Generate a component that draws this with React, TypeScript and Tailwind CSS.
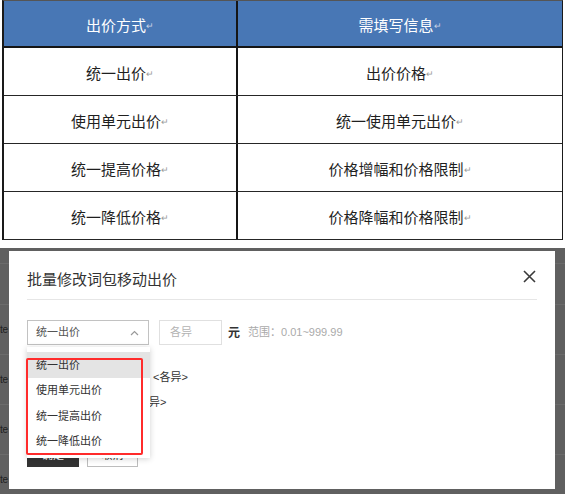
import React from "react"

const rows: [string, string][] = [
  ["统一出价", "出价价格"],
  ["使用单元出价", "统一使用单元出价"],
  ["统一提高价格", "价格增幅和价格限制"],
  ["统一降低价格", "价格降幅和价格限制"],
]

const options = ["统一出价", "使用单元出价", "统一提高出价", "统一降低出价"]

// Word 里的段落标记
function Mark({ light }: { light?: boolean }) {
  return <span className={`text-[9px] leading-none ${light ? "text-[#c9d3e6]" : "text-[#9a9a9a]"}`}>↵</span>
}

function Cell({ text, light, divider }: { text: string; light?: boolean; divider?: boolean }) {
  return (
    <div
      className={`flex items-center justify-center pt-[5px] ${divider ? "border-r-2 border-[#151515]" : ""}`}
    >
      <span>{text}</span>
      <Mark light={light} />
    </div>
  )
}

// 背景页面露出的灰色边条
function Strip({ withText, width }: { withText?: boolean; width: string }) {
  const heights = ["h-[16px]", "h-[41px]", "h-[50px]", "h-[50px]", "h-[50px]", "h-[50px]"]
  return (
    <div className={`${width} flex flex-col overflow-hidden`}>
      {heights.map((h, i) => (
        <div key={i} className={`${h} shrink-0 border-b border-[#6b6b6b] flex items-center`}>
          {withText && i >= 2 && <span className="text-[10px] leading-none text-[#1e1e1e] tracking-tight">te</span>}
        </div>
      ))}
    </div>
  )
}

export default function App() {
  return (
    <div className="w-[565px] h-[494px] bg-white overflow-hidden font-['Liberation_Sans','Noto_Sans_CJK_SC',sans-serif]">
      {/* 对照表 */}
      <div className="ml-[2px] w-[561px] border-t border-t-[#555] border-l-2 border-l-[#1a1a1a] border-r border-r-[#1a1a1a] text-[15px]">
        <div className="grid grid-cols-[234px_1fr] h-[47px] bg-[#4877b5] text-white border-b-2 border-[#151515]">
          <Cell text="出价方式" light divider />
          <Cell text="需填写信息" light />
        </div>
        {rows.map(([a, b]) => (
          <div key={a} className="grid grid-cols-[234px_1fr] h-[48px] text-[#1f1f1f] border-b border-[#262626]">
            <Cell text={a} divider />
            <Cell text={b} />
          </div>
        ))}
      </div>

      {/* 弹窗截图 */}
      <div className="mt-[8px] h-[246px] bg-[#606060] flex">
        <Strip withText width="w-[9px]" />
        <div className="flex flex-col">
          <div className="h-[3px]" />
          <div className="w-[546px] h-[238px] bg-white">
            <div className="mx-[18px] h-[49px] border-b border-[#e6e6e6] flex items-start justify-between">
              <div className="mt-[20px] text-[15px] leading-[18px] text-[#333]">批量修改词包移动出价</div>
              <svg className="mt-[19px] mr-[1px]" width="13" height="13" viewBox="0 0 13 13">
                <path d="M1 1 L12 12 M12 1 L1 12" stroke="#3a3a3a" strokeWidth="1.6" fill="none" />
              </svg>
            </div>

            <div className="ml-[18px] mt-[20px] flex items-center h-[25px]">
              <div className="relative z-10 w-[122px] h-[25px] border border-[#c2c2c2] flex items-center justify-between pl-[8px] pr-[9px] text-[11px] text-[#555]">
                <span>统一出价</span>
                <svg width="9" height="6" viewBox="0 0 9 6">
                  <path d="M1 5 L4.5 1.5 L8 5" stroke="#999" strokeWidth="1.2" fill="none" />
                </svg>

                <div className="absolute left-[-1px] top-[26px] w-[123px] h-[111px] bg-white shadow-[0_1px_6px_rgba(0,0,0,0.18)] pt-[5px]">
                  {options.map((o, i) => (
                    <div
                      key={o}
                      className={`h-[25.5px] flex items-center pl-[9px] text-[11px] text-[#333] ${i === 0 ? "bg-[#e4e4e4]" : ""}`}
                    >
                      {o}
                    </div>
                  ))}
                  <div className="absolute left-[-1px] top-[11px] w-[117px] h-[97px] border-2 border-[#ff2b2b] rounded-[2px]" />
                </div>
              </div>
              <div className="ml-[10px] w-[63px] h-[25px] border border-[#e0e0e0] flex items-center pl-[10px] text-[11px] text-[#b3b3b3]">
                各异
              </div>
              <span className="ml-[6px] text-[12px] font-bold text-[#333]">元</span>
              <span className="ml-[8px] text-[11px] text-[#aaa]">范围：0.01~999.99</span>
            </div>

            <div className="ml-[18px] mt-[20px] text-[11px] text-[#333]">
              <div className="h-[25px] leading-[25px] pl-[126px]">&lt;各异&gt;</div>
              <div className="h-[25px] leading-[25px] pl-[122px]">异&gt;</div>
            </div>

            <div className="ml-[18px] mt-[28px] flex gap-[8px] text-[11px]">
              <div className="w-[52px] h-[24px] bg-[#333] text-white flex items-center justify-center">确定</div>
              <div className="w-[51px] h-[24px] border border-[#bdbdbd] text-[#333] flex items-center justify-center">取消</div>
            </div>
          </div>
        </div>
        <Strip width="w-[10px]" />
      </div>
    </div>
  )
}
